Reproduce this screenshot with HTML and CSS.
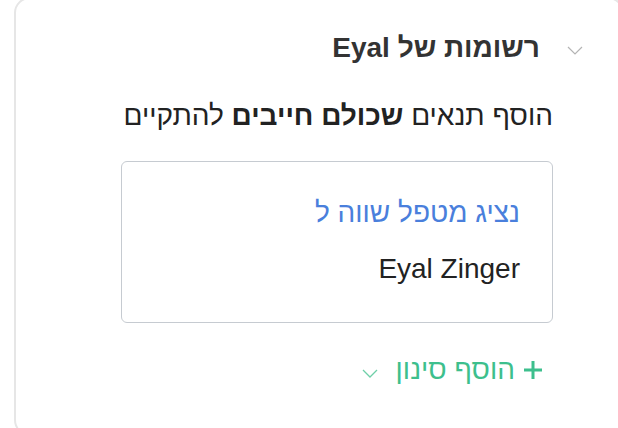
FILE: index.html
```html
<!DOCTYPE html>
<html lang="he">
<head>
<meta charset="utf-8">
<link rel="stylesheet" href="styles.css">
</head>
<body>
<div class="panel" dir="rtl">
  <div class="header">
    <svg class="chev" width="16" height="9" viewBox="0 0 16 9"><path d="M1 1 L8 8 L15 1" fill="none" stroke="#b4b4b4" stroke-width="1.2"/></svg>
    <span class="title">רשומות של Eyal</span>
  </div>
  <div class="desc">הוסף תנאים <b>שכולם חייבים</b> להתקיים</div>
  <div class="box">
    <div class="field">נציג מטפל שווה ל</div>
    <div class="value">Eyal Zinger</div>
  </div>
  <div class="add">
    <svg class="plus" width="20" height="20" viewBox="0 0 20 20"><path d="M10 1 V19 M1 10 H19" stroke="#3dbf8d" stroke-width="3" fill="none"/></svg>
    <span class="add-text">הוסף סינון</span>
    <svg class="chev-small" width="16" height="9" viewBox="0 0 16 9"><path d="M1 1 L8 8 L15 1" fill="none" stroke="#6fcfa8" stroke-width="1.3"/></svg>
  </div>
</div>
</body>
</html>
```

FILE: styles.css
```css
html, body {
  margin: 0;
  padding: 0;
  background: #ffffff;
  overflow: hidden;
}
body {
  font-family: "Liberation Sans", Arial, sans-serif;
  font-size: 28px;
  color: #222;
}
.panel {
  box-sizing: border-box;
  margin-top: -3px;
  margin-left: 14px;
  width: 610px;
  height: 439px;
  border: 2px solid #e6e6e6;
  border-radius: 16px;
  padding-top: 33px;
  padding-right: 69px;
}
.header {
  display: flex;
  align-items: center;
  height: 32px;
  margin-right: -30px;
}
.chev {
  display: block;
  margin-left: 27px;
  margin-top: 4px;
}
.title {
  font-weight: bold;
  color: #333;
  line-height: 32px;
}
.desc {
  margin-top: 36px;
  line-height: 32px;
  color: #222;
}
.desc b {
  font-weight: bold;
}
.box {
  box-sizing: border-box;
  margin-top: 29px;
  width: 432px;
  height: 162px;
  border: 1.5px solid #c6cbd1;
  border-radius: 6px;
  padding: 35px 32px 0 0;
}
.field {
  color: #4a7fdc;
  line-height: 32px;
}
.value {
  margin-top: 24px;
  line-height: 32px;
  color: #222;
}
.add {
  display: flex;
  align-items: center;
  margin-top: 31px;
  height: 32px;
  padding-right: 10px;
  color: #3dbf8d;
}
.plus {
  display: block;
  margin-left: 8px;
}
.add-text {
  line-height: 32px;
}
.chev-small {
  display: block;
  margin-right: 18px;
  margin-top: 6px;
}
```
